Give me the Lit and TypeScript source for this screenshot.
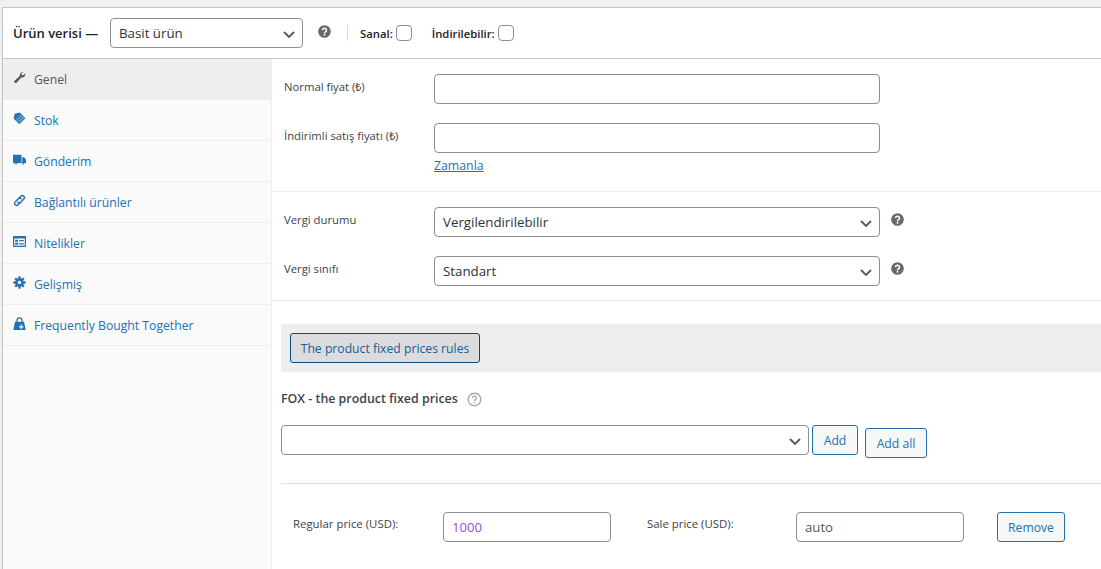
import { LitElement, html, css, svg } from 'lit';
import { customElement, state } from 'lit/decorators.js';

interface Tab {
  label: string;
  icon: unknown;
}

const wrench = svg`<path d="M14.600 1.400a4.200 4.200 0 0 0-5 5.300L2.300 13.500c-.9.900-.9 2 0 2.700.8.800 1.900.7 2.700-.1l6.800-7.400a4.200 4.200 0 0 0 5.200-5.200l-2.700 2.400-2.300-.7-.6-2.200z"/>`;
const tag = svg`<path d="M9.500.8 17.200 8.500 9 17 1 9.200 2.300 2.300z"/><g fill="none" stroke="#fafafa" stroke-width=".7" opacity=".75"><path d="M6 5.500 14 13M4 8 11.500 15M8.500 3.500 16 10.500M12.500 4.500 5 12.500M15 7 7.500 15"/></g>`;
const truck = svg`<path d="M0 2.500h11.800v11.300H0zM12.800 6h2.500l2.700 3.200v4.600h-5.200z"/><circle cx="4" cy="14.300" r="1.700"/><circle cx="13.800" cy="14.300" r="1.700"/><g fill="#fafafa"><circle cx="4" cy="14.300" r=".7"/><circle cx="13.800" cy="14.300" r=".7"/></g>`;
const link = svg`<g fill="none" stroke-width="1.900" stroke-linecap="round"><path d="M7.800 6.300 11 3a2.800 2.800 0 0 1 4 4l-4.300 4.400a2.800 2.800 0 0 1-3.900 0"/><path d="M10.200 11.700 7 15a2.800 2.800 0 0 1-4-4l4.300-4.400a2.800 2.800 0 0 1 3.900 0"/></g>`;
const list = svg`<path fill-rule="evenodd" d="M1 1.500h16a1 1 0 0 1 1 1v13a1 1 0 0 1-1 1H1a1 1 0 0 1-1-1v-13a1 1 0 0 1 1-1zM1.700 5v10h14.600V5z"/><path d="M3 6.500h4v2.700H3zM8.500 7h6.500v1.700H8.500zM3 10.800h4v2.700H3zM8.500 11.300h6.500V13H8.500z"/>`;
const gear = svg`<g><rect x="7.400" y=".5" width="3.200" height="17" rx=".6"/><rect x="7.400" y=".5" width="3.200" height="17" rx=".6" transform="rotate(45 9 9)"/><rect x="7.400" y=".5" width="3.200" height="17" rx=".6" transform="rotate(90 9 9)"/><rect x="7.400" y=".5" width="3.200" height="17" rx=".6" transform="rotate(135 9 9)"/><circle cx="9" cy="9" r="6"/><circle cx="9" cy="9" r="2.500" fill="#fafafa"/></g>`;
const bag = svg`<path fill-rule="evenodd" d="M2.700 6.500h2V4.700a4.300 4.300 0 0 1 8.600 0v1.800h2L17.500 18H.5zM6.300 6.500h5.400V4.700a2.700 2.700 0 0 0-5.400 0z"/><path fill="#fafafa" d="M10.600 10.500h1.600v2.300h2.300v1.600h-2.300v2.300h-1.600v-2.300H8.300v-1.600h2.300z"/>`;

const tabs: Tab[] = [
  { label: 'Genel', icon: wrench },
  { label: 'Stok', icon: tag },
  { label: 'Gönderim', icon: truck },
  { label: 'Bağlantılı ürünler', icon: link },
  { label: 'Nitelikler', icon: list },
  { label: 'Gelişmiş', icon: gear },
  { label: 'Frequently Bought Together', icon: bag },
];

@customElement('app-root')
export class AppRoot extends LitElement {
  @state()
  private active: string = 'Genel';

  static styles = css`
    :host {
      display: block;
      height: 569px;
      overflow: hidden;
      background: #f0f0f1;
      padding: 7px 0 0 2px;
      box-sizing: border-box;
      font-family: 'Open Sans', sans-serif;
      font-size: 12.500px;
      color: #3c434a;
    }
    * {
      box-sizing: border-box;
    }
    .box {
      height: 562px;
      background: #fff;
      border-top: 1px solid #c3c4c7;
      border-left: 1px solid #c3c4c7;
    }
    .head {
      height: 51px;
      display: flex;
      align-items: center;
      padding: 0 0 0 10px;
      border-bottom: 1px solid #c3c4c7;
      color: #1d2327;
    }
    .title {
      width: 97px;
      flex: none;
      font-size: 13px;
      font-weight: 600;
    }
    .type {
      width: 193px;
      padding-left: 8px;
    }
    .sel {
      position: relative;
      display: block;
      height: 30px;
      border: 1px solid #8c8f94;
      border-radius: 4px;
      background: #fff;
      padding: 0 8px;
      line-height: 28px;
      font-size: 13.300px;
      color: #2c3338;
    }
    .chev {
      position: absolute;
      right: 6px;
      top: 8px;
      width: 14px;
      height: 14px;
      fill: none;
      stroke: #50575e;
      stroke-width: 1.800;
    }
    .help {
      width: 13px;
      height: 13px;
      flex: none;
    }
    .head .help {
      margin: -4px 0 0 15px;
    }
    .sep {
      width: 1px;
      height: 16px;
      background: #dcdcde;
      margin: 0 12px 0 16px;
    }
    .check {
      display: flex;
      align-items: center;
      gap: 3px;
      font-size: 11.300px;
      font-weight: 600;
      margin-right: 20px;
    }
    .box-check {
      width: 16px;
      height: 16px;
      border: 1px solid #8c8f94;
      border-radius: 4px;
      background: #fff;
    }
    .body {
      display: flex;
      height: 510px;
    }
    .side {
      width: 269px;
      flex: none;
      background: #fafafa;
      border-right: 1px solid #eee;
    }
    .tab {
      height: 41px;
      display: flex;
      align-items: center;
      gap: 8px;
      padding: 0 0 0 10px;
      border-bottom: 1px solid #eee;
      color: #2271b1;
      font-size: 12.200px;
    }
    .tab svg {
      width: 13px;
      height: 13px;
      flex: none;
      margin-top: -3px;
      fill: #2271b1;
      stroke: #2271b1;
      stroke-width: 0;
    }
    .tab.on {
      background: #eee;
      color: #50575e;
    }
    .tab.on svg {
      fill: #50575e;
      stroke: #50575e;
    }
    .main {
      flex: 1;
      min-width: 0;
    }
    .group {
      padding: 15px 0 0 12px;
      border-bottom: 1px solid #eee;
    }
    .field {
      display: flex;
      height: 49px;
      align-items: flex-start;
    }
    .field label {
      width: 150px;
      flex: none;
      font-size: 11.300px;
      padding-top: 5px;
    }
    .wide {
      width: 446px;
    }
    .input {
      display: block;
      height: 30px;
      border: 1px solid #8c8f94;
      border-radius: 4px;
      background: #fff;
      padding: 0 8px;
      line-height: 28px;
      font-size: 13.200px;
      color: #50575e;
    }
    .field .help {
      margin: 6px 0 0 11px;
    }
    .link {
      display: block;
      margin: -15px 0 0 150px;
      height: 34px;
      color: #2271b1;
      text-decoration: underline;
      font-size: 12.300px;
    }
    .group.tax {
      height: 109px;
    }
    .rules {
      margin: 23px 0 0 9px;
      height: 48px;
      background: #eee;
      padding: 9px;
    }
    .btn {
      display: block;
      flex: none;
      height: 30px;
      border: 1px solid #2271b1;
      border-radius: 3px;
      background: #f6f7f7;
      color: #2271b1;
      line-height: 30px;
      text-align: center;
      font-size: 12.200px;
      white-space: nowrap;
    }
    .btn.press {
      width: 190px;
      background: #dcdcde;
      border-color: #0a4b78;
      color: #135e96;
    }
    .btn.add {
      width: 46px;
    }
    .btn.all {
      width: 62px;
      margin: 3px 0 0 7px;
    }
    .btn.rm {
      width: 68px;
      margin-left: 33px;
    }
    .fox {
      padding: 0 0 0 9px;
    }
    .fox-title {
      display: flex;
      align-items: center;
      margin-top: 17px;
      height: 18px;
      font-weight: 600;
      font-size: 12.400px;
    }
    .fox-title svg {
      width: 15px;
      height: 15px;
      margin: 2px 0 0 9px;
    }
    .adders {
      display: flex;
      align-items: flex-start;
      margin-top: 18px;
      height: 59px;
      border-bottom: 1px solid #ddd;
    }
    .adders .sel {
      width: 528px;
      margin-right: 3px;
    }
    .price {
      display: flex;
      align-items: flex-start;
      padding: 28px 0 0 12px;
    }
    .price label {
      font-size: 11.400px;
      font-weight: 500;
      padding-top: 4px;
    }
    .price .lab1 {
      width: 150px;
    }
    .price .lab2 {
      width: 149px;
    }
    .price .input {
      width: 168px;
    }
    .price .val {
      color: #9a4ce8;
      margin-right: 36px;
    }
  `;

  private chev() {
    return html`<svg class="chev" viewBox="0 0 14 14"><path d="M2 5l5 5 5-5"/></svg>`;
  }

  private help() {
    return html`<svg class="help" viewBox="0 0 14 14">
      <circle cx="7" cy="7" r="6.800" fill="#646970"/>
      <path d="M4.900 5.500a2.100 2.100 0 1 1 3.100 1.900c-.7.400-1 .7-1 1.400" fill="none" stroke="#fff" stroke-width="1.700"/>
      <rect x="6.100" y="9.600" width="1.800" height="1.800" fill="#fff"/>
    </svg>`;
  }

  render() {
    return html`
      <div class="box">
        <div class="head">
          <span class="title">Ürün verisi —</span>
          <div class="sel type">Basit ürün${this.chev()}</div>
          ${this.help()}
          <span class="sep"></span>
          <span class="check">Sanal: <span class="box-check"></span></span>
          <span class="check">İndirilebilir: <span class="box-check"></span></span>
        </div>
        <div class="body">
          <nav class="side">
            ${tabs.map(
              t => html`
                <div class="tab ${t.label === this.active ? 'on' : ''}">
                  <svg viewBox="0 0 18 18">${t.icon}</svg>
                  <span>${t.label}</span>
                </div>
              `
            )}
          </nav>
          <div class="main">
            <div class="group">
              <div class="field">
                <label>Normal fiyat (₺)</label>
                <div class="input wide"></div>
              </div>
              <div class="field">
                <label>İndirimli satış fiyatı (₺)</label>
                <div class="input wide"></div>
              </div>
              <a class="link">Zamanla</a>
            </div>
            <div class="group tax">
              <div class="field">
                <label>Vergi durumu</label>
                <div class="sel wide">Vergilendirilebilir${this.chev()}</div>
                ${this.help()}
              </div>
              <div class="field">
                <label>Vergi sınıfı</label>
                <div class="sel wide">Standart${this.chev()}</div>
                ${this.help()}
              </div>
            </div>
            <div class="rules">
              <div class="btn press">The product fixed prices rules</div>
            </div>
            <div class="fox">
              <div class="fox-title">
                FOX - the product fixed prices
                <svg viewBox="0 0 15 15">
                  <circle cx="7.500" cy="7.500" r="6.300" fill="none" stroke="#a7aaad" stroke-width="1.400"/>
                  <path d="M5.600 6a1.900 1.900 0 1 1 2.900 1.600c-.6.400-1 .7-1 1.300" fill="none" stroke="#a7aaad" stroke-width="1.300"/>
                  <rect x="6.800" y="9.900" width="1.400" height="1.400" fill="#a7aaad"/>
                </svg>
              </div>
              <div class="adders">
                <div class="sel">${this.chev()}</div>
                <div class="btn add">Add</div>
                <div class="btn all">Add all</div>
              </div>
              <div class="price">
                <label class="lab1">Regular price (USD):</label>
                <div class="input val">1000</div>
                <label class="lab2">Sale price (USD):</label>
                <div class="input">auto</div>
                <div class="btn rm">Remove</div>
              </div>
            </div>
          </div>
        </div>
      </div>
    `;
  }
}
